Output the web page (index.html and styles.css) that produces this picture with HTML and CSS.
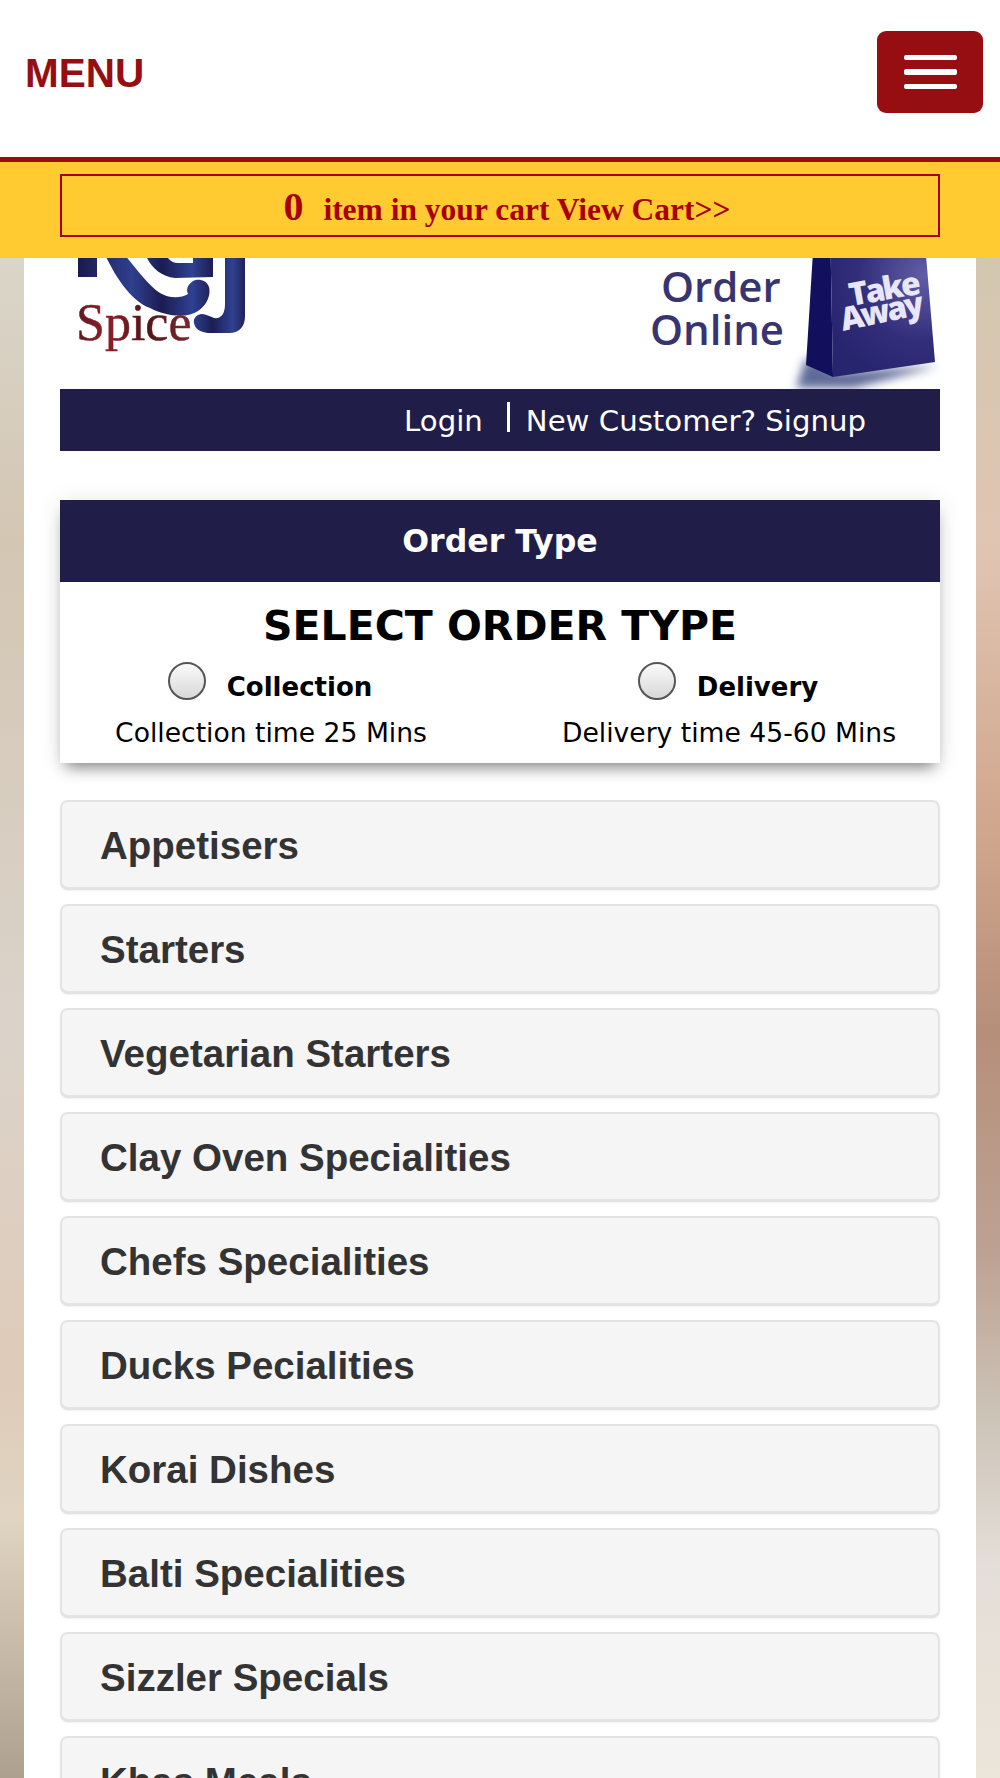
FILE: index.html
```html
<!DOCTYPE html>
<html lang="en">
<head>
    <meta charset="UTF-8">
    <meta name="viewport" content="width=device-width, initial-scale=1.0">
    <link rel="stylesheet" href="styles.css">
    <title>Raj Spice - Order Online</title>
</head>
<body>
    <header class="site-header">
        <div class="menu-bar">
            <span class="menu-title">MENU</span>
            <button class="menu-toggle" aria-label="Toggle navigation">
                <span></span>
                <span></span>
                <span></span>
            </button>
        </div>
        <div class="cart-bar">
            <a class="cart-link" href="#cart"><span class="cart-count">0</span> item in your cart View Cart&gt;&gt;</a>
        </div>
    </header>

    <main class="page">
        <div class="banner">
            <!-- logo, the top part sits under the fixed header -->
            <svg class="logo" width="190" height="169" viewBox="60 220 190 169" role="img" aria-label="Raj Spice">
                <defs>
                    <linearGradient id="logo-blue" gradientUnits="userSpaceOnUse" x1="78" y1="0" x2="246" y2="0">
                        <stop offset="0" stop-color="#1b1a4d"/>
                        <stop offset="0.32" stop-color="#2f3f8e"/>
                        <stop offset="0.5" stop-color="#1d1c52"/>
                        <stop offset="0.68" stop-color="#2e4192"/>
                        <stop offset="0.8" stop-color="#1e1d55"/>
                        <stop offset="0.92" stop-color="#2f4290"/>
                        <stop offset="1" stop-color="#1f1e56"/>
                    </linearGradient>
                    <linearGradient id="logo-red" gradientUnits="userSpaceOnUse" x1="77" y1="0" x2="192" y2="0">
                        <stop offset="0" stop-color="#5e1a1f"/>
                        <stop offset="0.25" stop-color="#8f1f28"/>
                        <stop offset="0.6" stop-color="#531318"/>
                        <stop offset="1" stop-color="#7a2a2e"/>
                    </linearGradient>
                </defs>
                <path fill="url(#logo-blue)" d="M78 220h19v57H78z"/>
                <path fill="url(#logo-blue)" d="M103 250C116 280 133 302 150 308C165 316 187 319 198 311C207 305 211 295 209 287C207 280 198 278 193 281C187 285 186 290 188 294C180 299 168 298 160 293C150 287 137 270 121 250Z"/>
                <path fill="url(#logo-blue)" d="M147 250V258C152 268 162 277 175 278L213 277V250H193V263H178C174 263 170 261 168 258V250Z"/>
                <path fill="url(#logo-blue)" d="M225 250V304C225 314 221 319 214 318C209 316 205 314 201 314C196 315 193 319 194 323C195 329 200 332 208 333H229C240 333 245 326 245 316V250Z"/>
                <text class="logo-spice" x="76" y="340" fill="url(#logo-red)" stroke="url(#logo-red)">Spice</text>
            </svg>
            <svg class="takeaway" width="320" height="169" viewBox="620 220 320 169" role="img" aria-label="Order Online Take Away">
                <defs>
                    <radialGradient id="bag-front" gradientUnits="userSpaceOnUse" cx="925" cy="275" r="110">
                        <stop offset="0" stop-color="#615da6"/>
                        <stop offset="0.6" stop-color="#322e7a"/>
                        <stop offset="1" stop-color="#28256f"/>
                    </radialGradient>
                    <filter id="bag-blur" x="-30%" y="-80%" width="160%" height="260%">
                        <feGaussianBlur stdDeviation="5"/>
                    </filter>
                </defs>
                <text class="order-word" x="661" y="302">Order</text>
                <text class="order-word" x="650" y="345">Online</text>
                <path fill="#5f6a98" filter="url(#bag-blur)" d="M806 358l-10 30h58l84-22-100 6z"/>
                <path fill="#120f5c" d="M815 220h15l3 157-27-12z"/>
                <path fill="url(#bag-front)" d="M830 220h93l12 142-102 15z"/>
                <text class="bag-word" transform="translate(851 306) rotate(-10)">Take</text>
                <text class="bag-word" transform="translate(843 331) rotate(-12)">Away</text>
            </svg>
        </div>

        <div class="account-bar">
            <a href="#login">Login</a>
            <span class="account-sep"></span>
            <a href="#signup">New Customer? Signup</a>
        </div>

        <section class="order-type">
            <h2>Order Type</h2>
            <h3>SELECT ORDER TYPE</h3>
            <div class="order-options">
                <div class="order-option">
                    <label><input type="radio" name="order-type"> Collection</label>
                    <p>Collection time 25 Mins</p>
                </div>
                <div class="order-option">
                    <label><input type="radio" name="order-type"> Delivery</label>
                    <p>Delivery time 45-60 Mins</p>
                </div>
            </div>
        </section>

        <div class="categories">
            <div class="category">Appetisers</div>
            <div class="category">Starters</div>
            <div class="category">Vegetarian Starters</div>
            <div class="category">Clay Oven Specialities</div>
            <div class="category">Chefs Specialities</div>
            <div class="category">Ducks Pecialities</div>
            <div class="category">Korai Dishes</div>
            <div class="category">Balti Specialities</div>
            <div class="category">Sizzler Specials</div>
            <div class="category">Khas Meals</div>
        </div>
    </main>
</body>
</html>
```

FILE: styles.css
```css
html, body {
    height: 100%;
}

body {
    margin: 0;
    overflow: hidden;
    font-family: "DejaVu Sans", Verdana, sans-serif;
    background-color: #fff;
}

/* fixed top part */
.site-header {
    position: fixed;
    top: 0;
    left: 0;
    right: 0;
    z-index: 10;
}

.menu-bar {
    height: 157px;
    box-sizing: border-box;
    padding: 31px 17px 0 25px;
    display: flex;
    justify-content: space-between;
    align-items: flex-start;
    background-color: #fff;
}

.menu-title {
    margin-top: 19px;
    font-family: "Liberation Sans", Arial, sans-serif;
    font-size: 40.5px;
    line-height: 46px;
    font-weight: bold;
    color: #970e12;
}

.menu-toggle {
    width: 106px;
    height: 82px;
    padding: 0;
    border: none;
    border-radius: 9px;
    background-color: #970e12;
    display: flex;
    flex-direction: column;
    justify-content: center;
    align-items: center;
    gap: 9px;
}

.menu-toggle span {
    display: block;
    width: 53px;
    height: 5.5px;
    border-radius: 2px;
    background-color: #fff;
}

.cart-bar {
    height: 101px;
    box-sizing: border-box;
    padding: 12px 60px 0;
    background-color: #ffcb30;
    border-top: 5px solid #970e12;
}

.cart-link {
    display: block;
    height: 63px;
    box-sizing: border-box;
    padding-left: 14px;
    border: 2px solid #a80000;
    text-align: center;
    font-family: "Liberation Serif", "Times New Roman", serif;
    font-size: 31.5px;
    line-height: 61px;
    font-weight: bold;
    color: #a80000;
    text-decoration: none;
}

.cart-count {
    font-size: 40px;
    margin-right: 12px;
}

/* page column */
.page {
    height: 100%;
    box-sizing: border-box;
    padding: 220px 60px 0;
    background-color: #fff;
    background-image:
        linear-gradient(to bottom, #dbd6ca 250px, #d3c6b3 542px, #dbd3ca 1030px, #dfcbb9 1380px, #e0d4c2 1517px, #ada08f 1778px),
        linear-gradient(to bottom, #d2c7b0 250px, #e0c5b3 542px, #d0a68c 835px, #b68f7a 1030px, #bda294 1255px, #cdc4b8 1420px, #e4ded8 1565px, #ebe5da 1778px);
    background-size: 24px 100%;
    background-position: left top, right top;
    background-repeat: no-repeat;
}

.banner {
    display: flex;
    justify-content: space-between;
    height: 169px;
}

.logo-spice {
    font-family: "Liberation Serif", "Times New Roman", serif;
    font-size: 52px;
    stroke-width: 0.5;
}

.order-word {
    font-family: "Open Sans", Verdana, sans-serif;
    font-size: 42px;
    font-weight: 600;
    fill: #38346f;
}

.bag-word {
    font-family: "Open Sans", Verdana, sans-serif;
    font-size: 32px;
    font-weight: 800;
    letter-spacing: -2.5px;
    fill: #e8e6fb;
}

.account-bar {
    height: 62px;
    box-sizing: border-box;
    padding: 2px 74px 0 0;
    display: flex;
    justify-content: flex-end;
    align-items: center;
    background-color: #201e48;
    font-size: 29.2px;
}

.account-bar a {
    color: #fff;
    text-decoration: none;
}

.account-sep {
    width: 3px;
    height: 30px;
    margin: -8px 16px 0 24px;
    background-color: #fff;
}

.order-type {
    margin-top: 49px;
    height: 263px;
    background-color: #fff;
    box-shadow: 0 10px 14px -6px rgba(0, 0, 0, 0.45), 0 2px 22px rgba(0, 0, 0, 0.1);
}

.order-type h2 {
    margin: 0;
    height: 82px;
    background-color: #201e48;
    color: #fff;
    text-align: center;
    font-size: 31.6px;
    line-height: 83px;
    font-weight: bold;
}

.order-type h3 {
    margin: 0;
    padding-top: 20px;
    text-align: center;
    font-size: 41px;
    line-height: 48px;
    font-weight: bold;
    color: #000;
}

.order-options {
    display: grid;
    grid-template-columns: 1fr 1fr;
    gap: 36px;
}

.order-option {
    text-align: center;
    color: #000;
}

.order-option label {
    display: flex;
    justify-content: center;
    align-items: center;
    gap: 21px;
    height: 52px;
    padding: 11px 2px 0 0;
    font-size: 26px;
    font-weight: bold;
}

.order-option input {
    appearance: none;
    width: 38px;
    height: 38px;
    margin: -12px 0 0;
    border: 2px solid #555;
    border-radius: 50%;
    background: linear-gradient(to bottom, #fafafa, #d8d8d8);
}

.order-option p {
    margin: 0;
    font-size: 26.6px;
    line-height: 40px;
}

.categories {
    margin-top: 37px;
    display: flex;
    flex-direction: column;
    gap: 14px;
}

.category {
    flex: none;
    height: 90px;
    box-sizing: border-box;
    padding-left: 38px;
    background-color: #f5f5f5;
    border: 2px solid #e3e3e3;
    border-bottom-width: 3px;
    border-radius: 8px;
    box-shadow: 0 1px 2px rgba(0, 0, 0, 0.06);
    font-family: "Liberation Sans", Arial, sans-serif;
    font-size: 38.5px;
    line-height: 88px;
    font-weight: bold;
    color: #333;
}
```
